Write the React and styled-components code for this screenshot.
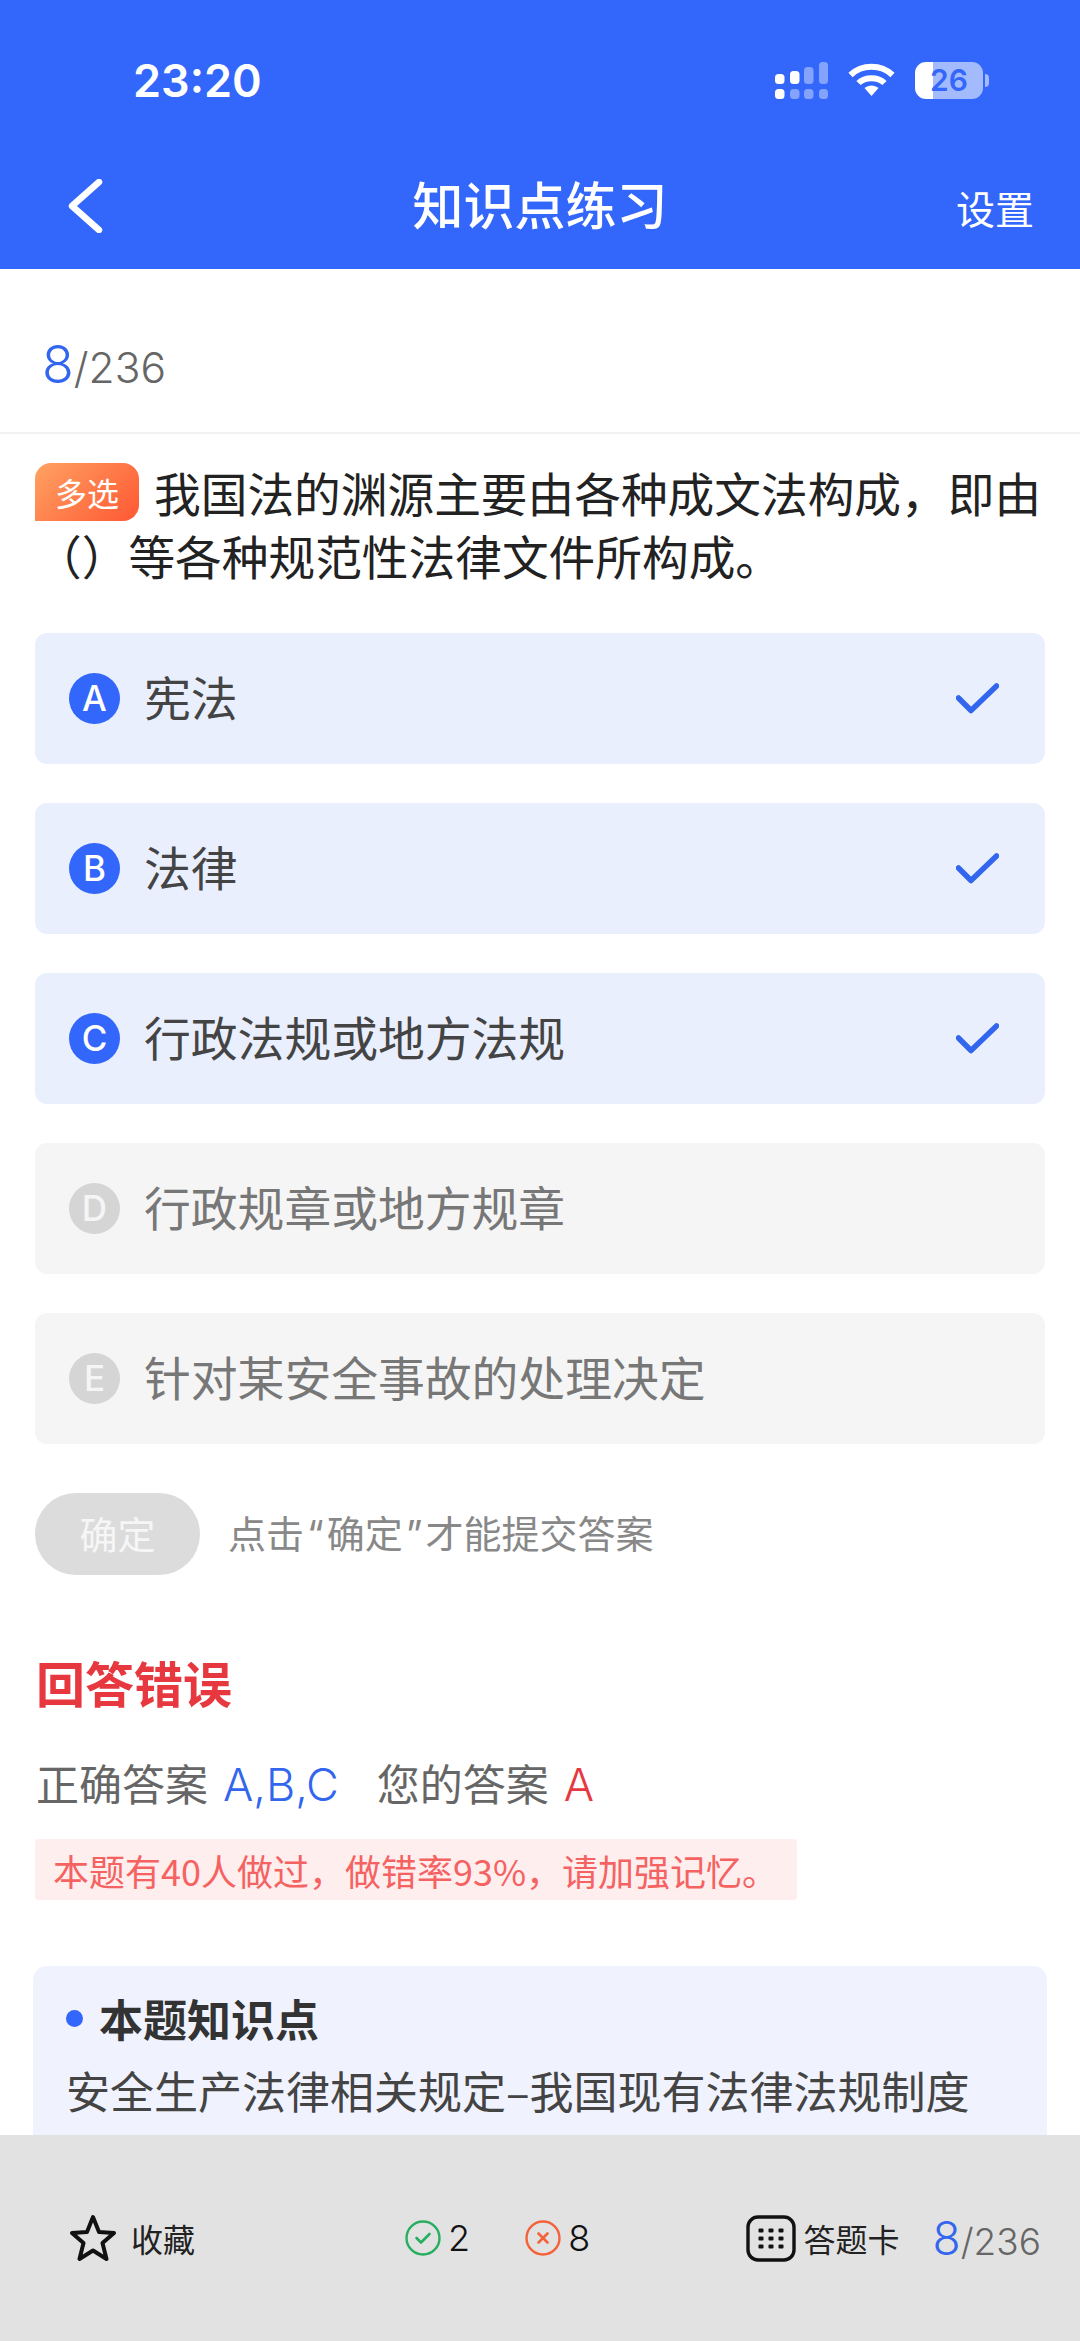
import React from "react";
import styled, { createGlobalStyle } from "styled-components";

const Global = createGlobalStyle`
  html, body { margin: 0; padding: 0; background: #fff; }
  * { box-sizing: border-box; }
  body { font-family: "Inter", "Noto Sans CJK SC", sans-serif; }
`;
const CJK = `"Noto Sans CJK SC", "Inter", sans-serif`;
const LATIN = `"Inter", "Noto Sans CJK SC", sans-serif`;
const BLUE = "#3366fa";

const Page = styled.div`
  width: 1080px; height: 2341px; display: flex; flex-direction: column; overflow: hidden; background: #fff;
`;
const Header = styled.header`
  height: 269px; flex: none; background: ${BLUE}; color: #fff; display: flex; flex-direction: column;
`;
const StatusBar = styled.div`
  height: 160px; display: flex; align-items: center; justify-content: space-between; padding: 0 91px 0 133px;
`;
const Clock = styled.span`
  font: 600 45px ${LATIN}; letter-spacing: 0;
`;
const StatusIcons = styled.div`
  display: flex; align-items: center; gap: 20px;
`;
const Battery = styled.span`
  position: relative; width: 68px; height: 37px; border-radius: 11px;
  background: linear-gradient(90deg, #fff 26%, rgba(255,255,255,.55) 26%);
  color: ${BLUE}; font: 600 30px/37px ${LATIN}; text-align: center;
  margin-right: 6px;
  &::after {
    content: ""; position: absolute; right: -6px; top: 12px; width: 4px; height: 13px;
    border-radius: 0 4px 4px 0; background: rgba(255,255,255,.55);
  }
`;
const NavBar = styled.nav`
  height: 92px; display: grid; grid-template-columns: 1fr auto 1fr; align-items: center; padding: 0 46px;
`;
const BackButton = styled.span`
  display: flex; align-items: center; padding: 0 0 0 21px;
`;
const Title = styled.h1`
  margin: 0 0 5px; font: 500 51px/1 ${CJK}; color: #fff;
`;
const NavAction = styled.span`
  justify-self: end; font: 400 39px/1 ${CJK}; color: #fff; margin-top: 2px;
`;
const Content = styled.main`
  flex: 1; min-height: 0; overflow: hidden; display: flex; flex-direction: column;
`;
const ProgressRow = styled.div`
  flex: none; height: 165px; display: flex; align-items: baseline; padding: 70px 0 0 42px; border-bottom: 2px solid #f2f2f2;
`;
const Current = styled.span`
  font: 300 ${p => p.$size}px/1 ${LATIN}; color: #3366ee;
`;
const Total = styled.span`
  font: 300 ${p => p.$size}px/1 ${LATIN}; color: #666;
`;
const Question = styled.div`
  flex: none; margin: 26px 35px 0; font: 400 46.7px/63px ${CJK}; color: #222; height: 126px;
`;
const Tag = styled.span`
  display: inline-flex; width: 104px; height: 58px; align-items: center; justify-content: center;
  vertical-align: top; margin: 3px 15px 0 0; padding-bottom: 1px;
  border-radius: 16px 16px 16px 0; background: linear-gradient(135deg, #ffa262, #ff5733);
  color: #fff; font: 400 32px/1 ${CJK};
`;
const Options = styled.div`
  flex: none; margin: 47px 35px 0; display: flex; flex-direction: column; gap: 39px;
`;
const Option = styled.div`
  height: 131px; border-radius: 12px; display: flex; align-items: center; padding: 0 46px 0 34px;
  background: ${p => (p.$on ? "#e9effd" : "#f5f5f5")};
`;
const Letter = styled.span`
  width: 51px; height: 51px; flex: none; border-radius: 50%; display: flex; align-items: center; justify-content: center;
  background: ${p => (p.$on ? BLUE : "#d5d5d5")}; color: ${p => (p.$on ? "#fff" : "#f5f5f5")};
  font: 500 35px/1 ${LATIN};
`;
const OptionText = styled.span`
  flex: 1; margin-left: 24px; padding-bottom: 4px; font: 400 46.8px/1 ${CJK}; color: ${p => (p.$on ? "#444" : "#777")};
`;
const Submit = styled.div`
  flex: none; margin: 49px 35px 0; display: flex; align-items: center; gap: 28px;
`;
const SubmitButton = styled.span`
  width: 165px; height: 82px; border-radius: 41px; background: #dcdcdc; color: #f6f6f6;
  display: flex; align-items: center; justify-content: center; padding-bottom: 2px; font: 400 38px/1 ${CJK};
`;
const Hint = styled.span`
  font: 400 38px/1 ${LATIN}; color: #888;
`;
const Quote = styled.span`
  margin: 0 3px;
`;
const ResultTitle = styled.h2`
  flex: none; margin: 78px 0 0 36px; font: 700 49px/58px ${CJK}; color: #e8383f;
`;
const Answers = styled.div`
  flex: none; margin: 46px 0 0 36px; font: 400 43px/50px ${CJK}; color: #666; display: flex; gap: 38px;
`;
const Mark = styled.span`
  color: ${p => p.$color}; font: 300 45px/50px ${LATIN}; margin-left: 15px;
`;
const Warning = styled.div`
  flex: none; align-self: flex-start; margin: 29px 0 0 35px; width: 762px; height: 61px; padding-left: 18px;
  background: #ffeeee; border-radius: 4px; display: flex; align-items: center;
  color: #f56262; font: 400 36px/1 ${CJK};
`;
const Knowledge = styled.section`
  flex: none; margin: 66px 33px 0; height: 260px; border-radius: 14px; background: #f0f3fe; padding: 27px 0 0 33px;
`;
const KnowledgeHead = styled.div`
  display: flex; align-items: center; gap: 16px; font: 700 44px/50px ${CJK}; color: #333;
`;
const Dot = styled.span`
  width: 17px; height: 17px; border-radius: 50%; background: ${BLUE};
`;
const KnowledgeText = styled.div`
  margin-top: 22px; font: 400 44px/50px ${CJK}; color: #444;
`;
const BottomBar = styled.footer`
  flex: none; height: 206px; background: #e2e2e2; padding: 0 39px 0 70px; display: flex; align-items: center;
`;
const BarGroup = styled.div`
  display: flex; align-items: center; gap: ${p => p.$gap}px; margin-left: ${p => p.$ml || "0"};
`;
const BarLabel = styled.span`
  font: 400 32px/1 ${CJK}; color: #222;
`;
const Count = styled.span`
  font: 300 36px/1 ${LATIN}; color: #111; margin-right: ${p => p.$mr || 0}px;
`;
const Fraction = styled.span`
  display: flex; align-items: baseline; margin-left: 25px;
`;

const BackIcon = () => (
  <svg width="36" height="54" viewBox="0 0 36 54" fill="none">
    <path d="M32 3 L5 27 L32 51" stroke="#fff" strokeWidth="6.5" strokeLinecap="round" strokeLinejoin="round" />
  </svg>
);
const Signal = () => (
  <svg width="53" height="37" viewBox="0 0 53 37" fill="#fff">
    <rect x="0" y="12" width="9.5" height="10" rx="3.5" />
    <rect x="15" y="9" width="9.5" height="13" rx="3.5" />
    <rect x="29" y="5" width="9.5" height="17" rx="3.5" opacity=".4" />
    <rect x="44" y="0" width="9" height="22" rx="3.5" opacity=".4" />
    <rect x="0" y="27" width="9.5" height="10" rx="3.5" />
    <rect x="15" y="27" width="9.5" height="10" rx="3.5" opacity=".4" />
    <rect x="29" y="27" width="9.5" height="10" rx="3.5" opacity=".4" />
    <rect x="44" y="27" width="9" height="10" rx="3.5" opacity=".4" />
  </svg>
);
const Wifi = () => (
  <svg width="47" height="34" viewBox="0 0 47 34" fill="none" stroke="#fff" strokeWidth="6">
    <path d="M2.5 12 C14 1 33 1 44.5 12" />
    <path d="M10.5 20 C17 13.5 30 13.5 36.5 20" />
    <path d="M16.5 25 L23.5 33 L30.5 25 C26 21.5 21 21.5 16.5 25 Z" fill="#fff" stroke="none" />
  </svg>
);
const Check = () => (
  <svg width="43" height="31" viewBox="0 0 43 31" fill="none">
    <path d="M2.5 15 L15 27.5 L40.5 3" stroke="#3366ee" strokeWidth="5.5" strokeLinecap="round" strokeLinejoin="round" />
  </svg>
);
const Star = () => (
  <svg width="46" height="48" viewBox="0 0 46 48" fill="none">
    <path d="M23 3 L29 18 L44 19 L32.5 29 L36.5 45 L23 36.5 L9.5 45 L13.5 29 L2 19 L17 18 Z" stroke="#111" strokeWidth="4" strokeLinejoin="round" />
  </svg>
);
const OkIcon = () => (
  <svg width="36" height="36" viewBox="0 0 36 36" fill="none" stroke="#27ae60" strokeWidth="2.4">
    <circle cx="18" cy="18" r="16.5" />
    <path d="M11.5 18 L16 22.5 L24.5 14" strokeWidth="2.6" strokeLinecap="round" strokeLinejoin="round" />
  </svg>
);
const WrongIcon = () => (
  <svg width="36" height="36" viewBox="0 0 36 36" fill="none" stroke="#f4623a" strokeWidth="2.4">
    <circle cx="18" cy="18" r="16.5" />
    <path d="M13.5 13.5 L22.5 22.5 M22.5 13.5 L13.5 22.5" strokeWidth="2.6" strokeLinecap="round" />
  </svg>
);
const GridIcon = () => (
  <svg width="50" height="47" viewBox="0 0 50 47" fill="none">
    <rect x="2" y="2" width="46" height="43" rx="10" stroke="#111" strokeWidth="3.4" />
    {[15.5, 23.5, 31.5].map(y => [15, 25, 35].map(x => (
      <rect key={`${x}-${y}`} x={x - 2.5} y={y - 2} width="5" height="4" rx="1" fill="#111" />
    )))}
  </svg>
);

const OPTIONS = [
  ["A", "宪法", true],
  ["B", "法律", true],
  ["C", "行政法规或地方法规", true],
  ["D", "行政规章或地方规章", false],
  ["E", "针对某安全事故的处理决定", false],
];

export default function App() {
  return (
    <Page>
      <Global />
      <Header>
        <StatusBar>
          <Clock>23:20</Clock>
          <StatusIcons>
            <Signal />
            <Wifi />
            <Battery>26</Battery>
          </StatusIcons>
        </StatusBar>
        <NavBar>
          <BackButton><BackIcon /></BackButton>
          <Title>知识点练习</Title>
          <NavAction>设置</NavAction>
        </NavBar>
      </Header>
      <Content>
        <ProgressRow>
          <Current $size={52}>8</Current>
          <Total $size={42.5}>/236</Total>
        </ProgressRow>
        <Question>
          <Tag>多选</Tag>我国法的渊源主要由各种成文法构成，即由<br />（）等各种规范性法律文件所构成。
        </Question>
        <Options>
          {OPTIONS.map(([l, t, on]) => (
            <Option key={l} $on={on}>
              <Letter $on={on}>{l}</Letter>
              <OptionText $on={on}>{t}</OptionText>
              {on && <Check />}
            </Option>
          ))}
        </Options>
        <Submit>
          <SubmitButton>确定</SubmitButton>
          <Hint>点击<Quote>“</Quote>确定<Quote>”</Quote>才能提交答案</Hint>
        </Submit>
        <ResultTitle>回答错误</ResultTitle>
        <Answers>
          <span>正确答案<Mark $color="#3366ee">A,B,C</Mark></span>
          <span>您的答案<Mark $color="#e8383f">A</Mark></span>
        </Answers>
        <Warning>本题有40人做过，做错率93%，请加强记忆。</Warning>
        <Knowledge>
          <KnowledgeHead><Dot />本题知识点</KnowledgeHead>
          <KnowledgeText>安全生产法律相关规定–我国现有法律法规制度</KnowledgeText>
        </Knowledge>
      </Content>
      <BottomBar>
        <BarGroup $gap={15}><Star /><BarLabel>收藏</BarLabel></BarGroup>
        <BarGroup $gap={7} $ml="210px">
          <OkIcon /><Count $mr={48}>2</Count>
          <WrongIcon /><Count>8</Count>
        </BarGroup>
        <BarGroup $gap={8} $ml="auto">
          <GridIcon /><BarLabel>答题卡</BarLabel>
          <Fraction><Current $size={46}>8</Current><Total $size={37}>/236</Total></Fraction>
        </BarGroup>
      </BottomBar>
    </Page>
  );
}
